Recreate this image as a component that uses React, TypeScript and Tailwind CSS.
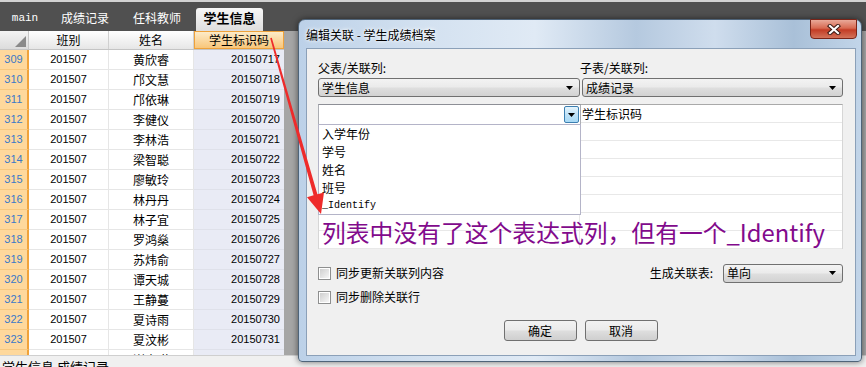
import React from "react";

const rows: [number, string, string][] = [
  [309, "黄欣睿", "20150717"],
  [310, "邝文慧", "20150718"],
  [311, "邝依琳", "20150719"],
  [312, "李健仪", "20150720"],
  [313, "李林浩", "20150721"],
  [314, "梁智聪", "20150722"],
  [315, "廖敏玲", "20150723"],
  [316, "林丹丹", "20150724"],
  [317, "林子宜", "20150725"],
  [318, "罗鸿燊", "20150726"],
  [319, "苏炜俞", "20150727"],
  [320, "谭天城", "20150728"],
  [321, "王静蔓", "20150729"],
  [322, "夏诗雨", "20150730"],
  [323, "夏汶彬", "20150731"],
  [324, "谢嘉琪", "20150732"],
];

const cjk = "font-['Noto_Sans_CJK_SC',sans-serif]";

function DownArrow() {
  return (
    <svg width="7" height="4" viewBox="0 0 7 4">
      <polygon points="0,0 7,0 3.5,4" fill="#000" />
    </svg>
  );
}

function Select({ value, className = "" }: { value: string; className?: string }) {
  return (
    <div
      className={`flex items-center h-[19px] rounded-[3px] border border-[#707070] bg-[linear-gradient(#f3f3f3,#ebebeb_45%,#dedede_55%,#d2d2d2)] pl-[3px] pr-[6px] ${className}`}
    >
      <span className="flex-1 text-[12px] leading-none">{value}</span>
      <DownArrow />
    </div>
  );
}

function Button({ label }: { label: string }) {
  return (
    <div className="flex items-center justify-center w-[73px] h-[21px] rounded-[3px] border border-[#707070] bg-[linear-gradient(#f2f2f2,#ebebeb_45%,#dddddd_55%,#cfcfcf)] text-[12px]">
      {label}
    </div>
  );
}

function Checkbox({ label }: { label: string }) {
  return (
    <div className="flex items-center gap-[5px]">
      <div className="w-[13px] h-[13px] border border-[#8e8f8f] bg-white p-[1px]">
        <div className="w-full h-full bg-[linear-gradient(135deg,#cfcfcf,#f6f6f6)]" />
      </div>
      <span className="text-[12px] leading-none">{label}</span>
    </div>
  );
}

function TabBar() {
  return (
    <div className="flex items-end gap-[6px] h-[29px] pl-[4px] bg-[#505050] text-white">
      <div className="w-[42px] h-[23px] pt-[3px] text-center font-['Liberation_Mono',monospace] text-[11px] leading-[14px]">
        main
      </div>
      <div className="w-[66px] h-[23px] pt-[3px] text-center text-[12px] leading-[14px]">成绩记录</div>
      <div className="w-[66px] h-[23px] pt-[3px] text-center text-[12px] leading-[14px]">任科教师</div>
      <div className="w-[67px] h-[23px] pt-[3px] text-center text-[13px] leading-[14px] font-bold text-black rounded-t-[3px] bg-[linear-gradient(#f7f7f7,#dedede)]">
        学生信息
      </div>
    </div>
  );
}

function DataGrid() {
  return (
    <div className="w-[284px] bg-white">
      <div className="flex h-[19px] text-[12px] border-b border-[#c4c4c4]">
        <div className="relative w-[29px] border-r border-[#c8c8c8] bg-[linear-gradient(#f4f4f4,#dcdcdc)]">
          <svg className="absolute left-[15px] top-[5px]" width="11" height="11" viewBox="0 0 11 11">
            <polygon points="11,0 11,11 0,11" fill="#8a8a8a" />
          </svg>
        </div>
        <div className="w-[80px] flex items-center justify-center border-r border-[#d0d0d0] bg-[linear-gradient(#ffffff,#e6e6e6)]">
          班别
        </div>
        <div className="w-[85px] flex items-center justify-center border-r border-[#d0d0d0] bg-[linear-gradient(#ffffff,#e6e6e6)]">
          姓名
        </div>
        <div className="w-[90px] flex items-center justify-center border border-[#efa23a] bg-[linear-gradient(#fdebc8,#f8c67a)]">
          学生标识码
        </div>
      </div>
      <div className="h-[305px] overflow-hidden">
        {rows.map(([n, name, id]) => (
          <div key={n} className="flex h-[20px]">
            <div className="w-[29px] flex items-center justify-center border-r-2 border-b border-r-[#f0a23a] border-b-[#f6c880] bg-[#fed89c] text-[11px] text-[#3a78c8] font-['Liberation_Sans',sans-serif]">
              {n}
            </div>
            <div className="w-[80px] flex items-center justify-center border-r border-b border-[#e6e6e6] text-[11px] font-['Liberation_Sans',sans-serif]">
              201507
            </div>
            <div className="w-[85px] flex items-center justify-center border-r border-b border-[#e6e6e6] text-[12px]">
              {name}
            </div>
            <div className="w-[90px] flex items-center justify-end pr-[4px] border-b border-[#dfe1ea] bg-[#e9ebf5] text-[11px] font-['Liberation_Sans',sans-serif]">
              {id}
            </div>
          </div>
        ))}
      </div>
    </div>
  );
}

function LinkGrid() {
  const lines = Array.from({ length: 8 });
  return (
    <div className="relative mt-[7px] h-[145px] border-t border-x border-b border-t-[#a9a9a9] border-x-[#d6d6d6] border-b-[#d6d6d6] bg-white">
      {lines.map((_, i) => (
        <div key={i} className="flex h-[18px] border-b border-[#e8e8e8]">
          <div className="w-[261px] border-r border-[#e8e8e8]" />
          <div className="flex-1 pl-[2px] text-[12px] leading-[17px]">{i === 0 ? "学生标识码" : ""}</div>
        </div>
      ))}

      {/* combo editor */}
      <div className="absolute left-[-1px] top-[-1px] w-[263px] h-[21px] flex border border-[#abadb3] border-t-[#8d8f96] bg-white">
        <div className="flex-1" />
        <div className="w-[15px] my-[1px] mr-[1px] flex items-center justify-center rounded-[2px] border border-[#3c7fb1] bg-[linear-gradient(#e6f4fc,#bfe2f7_50%,#a7d9f5)]">
          <DownArrow />
        </div>
      </div>

      {/* dropdown list */}
      <div className="absolute left-[-1px] top-[19px] w-[263px] h-[91px] border border-[#b4b4c8] bg-white pl-[3px] text-[12px]">
        <div className="h-[18px] leading-[18px]">入学年份</div>
        <div className="h-[18px] leading-[18px]">学号</div>
        <div className="h-[18px] leading-[18px]">姓名</div>
        <div className="h-[18px] leading-[18px]">班号</div>
        <div className="h-[18px] leading-[18px] font-['Liberation_Mono',monospace] text-[10px]">_Identify</div>
      </div>

      {/* annotation */}
      <div className="absolute left-[3px] top-[113px] whitespace-nowrap text-[23.8px] leading-[28px] text-[#820a8c]">
        列表中没有了这个表达式列，但有一个_Identify
      </div>
    </div>
  );
}

function Dialog() {
  return (
    <div className="absolute left-[298px] top-[19px] w-[564px] h-[343px] flex flex-col rounded-t-[7px] rounded-b-[4px] border border-[#4f6479] bg-[linear-gradient(90deg,#bcd1e8_0%,#d3e1f0_22%,#e0eaf5_42%,#b5c9df_60%,#cfdded_74%,#a9c0d8_88%,#c2d5e9_100%)] shadow-[0_0_6px_rgba(0,0,0,0.55)]">
      <div className="h-[28px] flex items-center pl-[7px] pt-[1px] text-[12px] [text-shadow:0_0_5px_#fff,0_0_3px_#fff]">
        编辑关联 - 学生成绩档案
      </div>
      <div className="absolute right-[4px] top-[-1px] w-[47px] h-[20px] flex items-center justify-center rounded-b-[4px] border border-[#7a2418] bg-[linear-gradient(#e9a999,#d86a52_45%,#c33c25_55%,#d3735a)]">
        <svg width="14" height="11" viewBox="0 0 14 11">
          <path d="M3 2 L11 9 M11 2 L3 9" stroke="#3b1a14" strokeWidth="4.2" strokeLinecap="square" />
          <path d="M3 2 L11 9 M11 2 L3 9" stroke="#fff" strokeWidth="2.2" strokeLinecap="square" />
        </svg>
      </div>

      <div className="flex-1 ml-[7px] mr-[5px] mb-[5px] border border-[#8ba0b8] bg-[#f0f0f0] pt-[11px] pl-[11px] pr-[12px]">
        <div className="flex h-[16px] text-[12px] leading-[16px]">
          <div className="w-[262px]">父表/关联列:</div>
          <div className="flex-1">子表/关联列:</div>
        </div>
        <div className="flex mt-[2px]">
          <Select value="学生信息" className="w-[262px]" />
          <Select value="成绩记录" className="flex-1 ml-[2px]" />
        </div>

        <LinkGrid />

        <div className="flex items-center justify-between h-[20px] mt-[14px]">
          <Checkbox label="同步更新关联列内容" />
          <div className="flex items-center gap-[10px]">
            <span className="text-[12px] leading-none">生成关联表:</span>
            <Select value="单向" className="w-[120px]" />
          </div>
        </div>
        <div className="flex items-center h-[20px] mt-[4px]">
          <Checkbox label="同步删除关联行" />
        </div>

        <div className="flex justify-center gap-[8px] mt-[13px]">
          <Button label="确定" />
          <Button label="取消" />
        </div>
      </div>
    </div>
  );
}

export default function App() {
  return (
    <div className={`relative w-[866px] h-[367px] overflow-hidden bg-[#5a5a5a] text-black ${cjk}`}>
      <div className="h-[2px] bg-[#d2d2d2]" />
      <TabBar />
      <div className="flex h-[324px]">
        <DataGrid />
        <div className="flex-1 bg-[#a6a6a6]" />
      </div>
      <div className="h-[12px] overflow-hidden border-t border-[#cfcfcf] bg-[#f0f0f0] pl-[2px] pt-[3px] text-[13px] leading-[16px]">
        学生信息 成绩记录
      </div>

      <Dialog />

      <svg className="absolute inset-0 pointer-events-none" width="866" height="367" viewBox="0 0 866 367">
        <polygon
          points="271.8,37.8 317.4,194.3 324,192.4 321,214 307,197.3 313.6,195.3 270.2,38.2"
          fill="#ee2b2b"
        />
      </svg>
    </div>
  );
}
